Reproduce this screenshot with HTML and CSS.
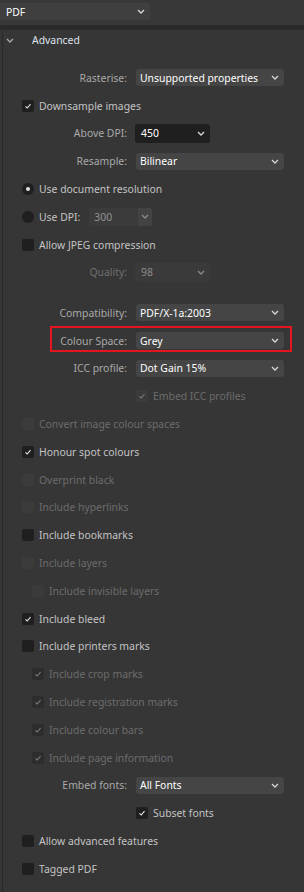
FILE: index.html
```html
<!DOCTYPE html>
<html lang="en">

<head>
  <meta charset="UTF-8">
  <meta name="viewport" content="width=device-width, initial-scale=1.0">
  <title>PDF Export - Advanced</title>
  <link rel="stylesheet" href="styles.css">
</head>

<body>
  <div class="top-bar">
    <div class="select preset">
      <span>PDF</span>
      <svg class="chev" width="8" height="5" viewBox="0 0 8 5"><path d="M1 1L4 4L7 1" /></svg>
    </div>
  </div>
  <div class="separator"></div>

  <div class="panel">
    <div class="panel-header">
      <svg class="chev header-chev" width="8" height="5" viewBox="0 0 8 5"><path d="M1 1L4 4L7 1" /></svg>
      <span>Advanced</span>
    </div>

    <div class="rows">
      <div class="field">
        <label class="field-label">Rasterise:</label>
        <div class="select wide"><span>Unsupported properties</span><svg class="chev" width="8" height="5" viewBox="0 0 8 5"><path d="M1 1L4 4L7 1" /></svg></div>
      </div>

      <div class="check">
        <span class="box checked"><svg width="12" height="12" viewBox="0 0 12 12"><path d="M3.5 6.3L5.2 8L8.5 4.2" /></svg></span>
        <span>Downsample images</span>
      </div>

      <div class="field">
        <label class="field-label">Above DPI:</label>
        <div class="select short dark"><span>450</span><svg class="chev" width="8" height="5" viewBox="0 0 8 5"><path d="M1 1L4 4L7 1" /></svg></div>
      </div>

      <div class="field">
        <label class="field-label">Resample:</label>
        <div class="select wide"><span>Bilinear</span><svg class="chev" width="8" height="5" viewBox="0 0 8 5"><path d="M1 1L4 4L7 1" /></svg></div>
      </div>

      <div class="check">
        <span class="radio selected"></span>
        <span>Use document resolution</span>
      </div>

      <div class="check">
        <span class="radio"></span>
        <span>Use DPI:</span>
        <div class="spinner">
          <span class="spin-value">300</span>
          <span class="spin-button"><svg class="chev" width="8" height="5" viewBox="0 0 8 5"><path d="M1 1L4 4L7 1" /></svg></span>
        </div>
      </div>

      <div class="check">
        <span class="box"></span>
        <span>Allow JPEG compression</span>
      </div>

      <div class="field disabled">
        <label class="field-label">Quality:</label>
        <div class="select short"><span>98</span><svg class="chev" width="8" height="5" viewBox="0 0 8 5"><path d="M1 1L4 4L7 1" /></svg></div>
      </div>

      <div class="spacer"></div>

      <div class="field">
        <label class="field-label">Compatibility:</label>
        <div class="select wide"><span>PDF/X-1a:2003</span><svg class="chev" width="8" height="5" viewBox="0 0 8 5"><path d="M1 1L4 4L7 1" /></svg></div>
      </div>

      <div class="field highlight">
        <label class="field-label">Colour Space:</label>
        <div class="select wide"><span>Grey</span><svg class="chev" width="8" height="5" viewBox="0 0 8 5"><path d="M1 1L4 4L7 1" /></svg></div>
      </div>

      <div class="field">
        <label class="field-label">ICC profile:</label>
        <div class="select wide"><span>Dot Gain 15%</span><svg class="chev" width="8" height="5" viewBox="0 0 8 5"><path d="M1 1L4 4L7 1" /></svg></div>
      </div>

      <div class="check sub-field disabled">
        <span class="box checked"><svg width="12" height="12" viewBox="0 0 12 12"><path d="M3.5 6.3L5.2 8L8.5 4.2" /></svg></span>
        <span>Embed ICC profiles</span>
      </div>

      <div class="check disabled">
        <span class="box"></span>
        <span>Convert image colour spaces</span>
      </div>

      <div class="check">
        <span class="box checked"><svg width="12" height="12" viewBox="0 0 12 12"><path d="M3.5 6.3L5.2 8L8.5 4.2" /></svg></span>
        <span>Honour spot colours</span>
      </div>

      <div class="check disabled">
        <span class="box"></span>
        <span>Overprint black</span>
      </div>

      <div class="check disabled">
        <span class="box"></span>
        <span>Include hyperlinks</span>
      </div>

      <div class="check">
        <span class="box"></span>
        <span>Include bookmarks</span>
      </div>

      <div class="check disabled">
        <span class="box"></span>
        <span>Include layers</span>
      </div>

      <div class="check indent disabled">
        <span class="box"></span>
        <span>Include invisible layers</span>
      </div>

      <div class="check">
        <span class="box checked"><svg width="12" height="12" viewBox="0 0 12 12"><path d="M3.5 6.3L5.2 8L8.5 4.2" /></svg></span>
        <span>Include bleed</span>
      </div>

      <div class="check">
        <span class="box"></span>
        <span>Include printers marks</span>
      </div>

      <div class="check indent disabled dim">
        <span class="box checked"><svg width="12" height="12" viewBox="0 0 12 12"><path d="M3.5 6.3L5.2 8L8.5 4.2" /></svg></span>
        <span>Include crop marks</span>
      </div>

      <div class="check indent disabled dim">
        <span class="box checked"><svg width="12" height="12" viewBox="0 0 12 12"><path d="M3.5 6.3L5.2 8L8.5 4.2" /></svg></span>
        <span>Include registration marks</span>
      </div>

      <div class="check indent disabled dim">
        <span class="box checked"><svg width="12" height="12" viewBox="0 0 12 12"><path d="M3.5 6.3L5.2 8L8.5 4.2" /></svg></span>
        <span>Include colour bars</span>
      </div>

      <div class="check indent disabled dim">
        <span class="box checked"><svg width="12" height="12" viewBox="0 0 12 12"><path d="M3.5 6.3L5.2 8L8.5 4.2" /></svg></span>
        <span>Include page information</span>
      </div>

      <div class="field">
        <label class="field-label">Embed fonts:</label>
        <div class="select wide"><span>All Fonts</span><svg class="chev" width="8" height="5" viewBox="0 0 8 5"><path d="M1 1L4 4L7 1" /></svg></div>
      </div>

      <div class="check sub-field">
        <span class="box checked"><svg width="12" height="12" viewBox="0 0 12 12"><path d="M3.5 6.3L5.2 8L8.5 4.2" /></svg></span>
        <span>Subset fonts</span>
      </div>

      <div class="check">
        <span class="box"></span>
        <span>Allow advanced features</span>
      </div>

      <div class="check">
        <span class="box"></span>
        <span>Tagged PDF</span>
      </div>
    </div>
  </div>
</body>

</html>
```

FILE: styles.css
```css
body {
  margin: 0;
  padding: 0;
  background-color: #363636;
  color: #c4c4c4;
  font-family: "Noto Sans", "Open Sans", sans-serif;
  font-size: 10.4px;
}

svg {
  display: block;
}

.chev path {
  fill: none;
  stroke: #d8d8d8;
  stroke-width: 1.3;
}

.top-bar {
  height: 25px;
  padding-top: 3px;
  box-sizing: border-box;
  background-color: #383838;
}

.separator {
  height: 5px;
  background-color: #2a2a2a;
}

.panel {
  margin-left: 2px;
  border-left: 1px solid #292929;
  min-height: 862px;
}

.panel-header {
  display: flex;
  align-items: center;
  height: 20px;
  color: #dde4ee;
}

.header-chev {
  margin-left: 3px;
  margin-right: 18px;
}

.header-chev path {
  stroke: #aaaaaa;
}

.rows {
  padding-top: 14px;
}

/* dropdowns */
.select {
  display: flex;
  align-items: center;
  justify-content: space-between;
  height: 17px;
  padding: 0 5px 0 4px;
  box-sizing: border-box;
  background-color: #454545;
  border-radius: 3px;
  color: #ffffff;
}

.preset {
  width: 150px;
  padding-left: 6px;
  border-radius: 0 3px 3px 0;
  background-color: #3f3f3f;
}

.wide {
  width: 148px;
}

.short {
  width: 75px;
  height: 19px;
  margin-left: -1px;
  padding-left: 6px;
}

.dark {
  background-color: #1f1f1f;
}

/* rows */
.field,
.check {
  position: relative;
  display: flex;
  align-items: center;
  height: 27.8px;
}

.field-label {
  width: 133px;
  padding-right: 9px;
  box-sizing: border-box;
  text-align: right;
  color: #a9a9a9;
}

.field.disabled .field-label {
  color: #6f6f6f;
}

.field.disabled .select {
  background-color: #3a3a3a;
  color: #8c8c8c;
}

.field.disabled .chev path {
  stroke: #8a8a8a;
}

.highlight::after {
  content: "";
  position: absolute;
  left: 47px;
  top: -1px;
  width: 242px;
  height: 26px;
  border: 2px solid #e4151f;
  box-sizing: border-box;
}

.spacer {
  height: 12.6px;
}

.check {
  padding-left: 19px;
  gap: 5px;
}

.check.indent {
  padding-left: 29px;
}

.check.sub-field {
  padding-left: 133px;
}

.check.disabled {
  color: #6c6c6c;
}

/* checkboxes and radios */
.box {
  width: 12px;
  height: 12px;
  border-radius: 2px;
  background-color: #1f1f1f;
  flex-shrink: 0;
}

.box path {
  fill: none;
  stroke: #e6e6e6;
  stroke-width: 1.1;
}

.check.disabled .box {
  background-color: #3b3b3b;
}

.check.disabled .box path {
  stroke: #7a7a7a;
}

.check.dim .box {
  background-color: #2d2d2d;
}

.radio {
  width: 12px;
  height: 12px;
  border-radius: 50%;
  background-color: #1f1f1f;
  display: flex;
  align-items: center;
  justify-content: center;
  flex-shrink: 0;
}

.radio.selected::after {
  content: "";
  width: 4px;
  height: 4px;
  border-radius: 50%;
  background-color: #e0e0e0;
}

.spinner {
  display: flex;
  height: 18px;
  margin-left: 4px;
}

.spin-value {
  display: flex;
  align-items: center;
  width: 49px;
  padding-left: 5px;
  box-sizing: border-box;
  background-color: #3b3b3b;
  border-radius: 2px 0 0 2px;
  color: #929292;
}

.spin-button {
  display: flex;
  align-items: center;
  justify-content: center;
  width: 14px;
  background-color: #434343;
  border-radius: 0 2px 2px 0;
}

.spin-button path {
  stroke: #8a8a8a;
}
```
